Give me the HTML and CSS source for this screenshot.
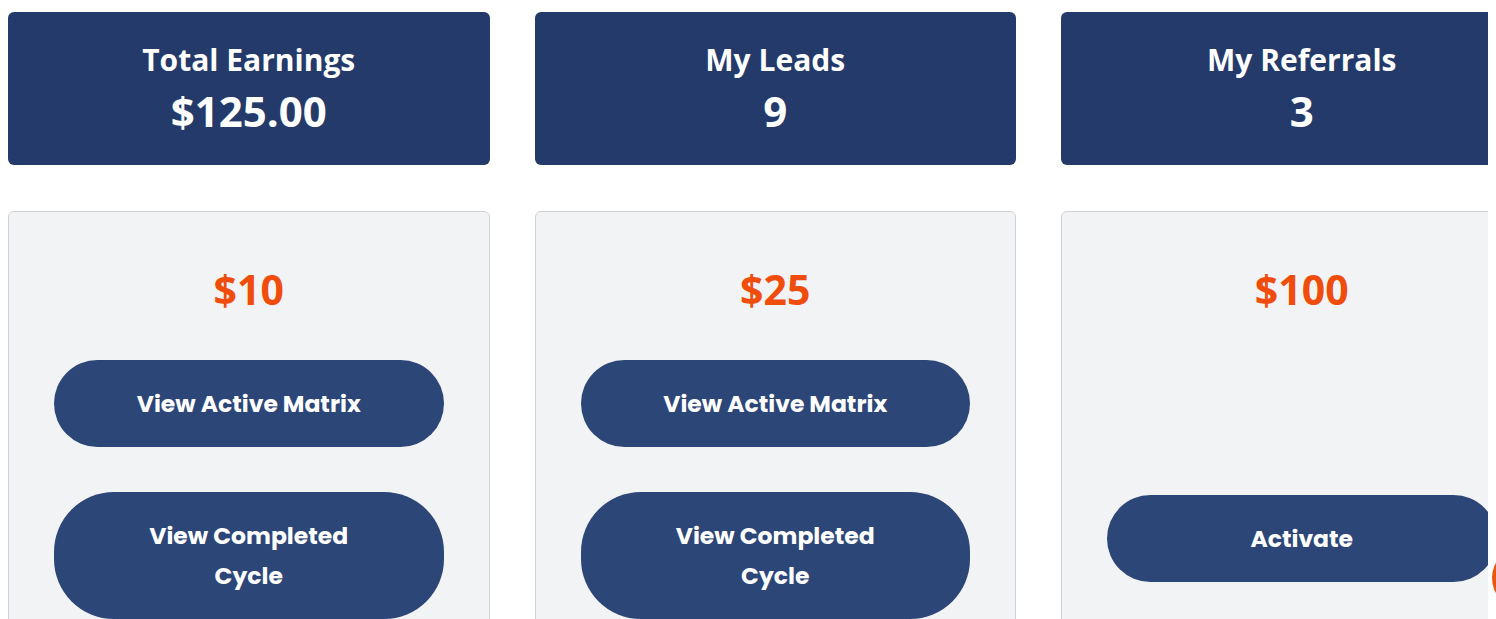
FILE: index.html
```html
<!DOCTYPE html>
<html lang="en">

<head>
  <meta charset="UTF-8">
  <meta name="viewport" content="width=device-width, initial-scale=1.0">
  <title>Dashboard</title>
  <link rel="stylesheet" href="styles.css">
</head>

<body>
  <div class="dashboard">
    <div class="stats">
      <div class="stat">
        <h2 class="stat-title">Total Earnings</h2>
        <p class="stat-value">$125.00</p>
      </div>
      <div class="stat">
        <h2 class="stat-title">My Leads</h2>
        <p class="stat-value">9</p>
      </div>
      <div class="stat">
        <h2 class="stat-title">My Referrals</h2>
        <p class="stat-value">3</p>
      </div>
    </div>

    <div class="plans">
      <div class="plan">
        <h3 class="plan-price">$10</h3>
        <button class="plan-btn">View Active Matrix</button>
        <button class="plan-btn">View Completed<br>Cycle</button>
      </div>
      <div class="plan">
        <h3 class="plan-price">$25</h3>
        <button class="plan-btn">View Active Matrix</button>
        <button class="plan-btn">View Completed<br>Cycle</button>
      </div>
      <div class="plan">
        <h3 class="plan-price">$100</h3>
        <button class="plan-btn plan-btn--activate">Activate</button>
      </div>
    </div>
  </div>
  <div class="chat-bubble"></div>
</body>

</html>
```

FILE: styles.css
```css
body {
  margin: 8px;
  background: #fff;
  font-family: "Open Sans", "Noto Sans", sans-serif;
}

.dashboard {
  padding-top: 4px;
  width: 1535px;
}

.stats,
.plans {
  display: grid;
  grid-template-columns: repeat(3, 481.5px);
  column-gap: 45px;
}

.stat {
  background: #243a6a;
  border-radius: 6px;
  color: #fff;
  text-align: center;
  padding: 30px 0 29px;
}

.stat-title {
  margin: 0;
  font-size: 30px;
  font-weight: 700;
  line-height: 36px;
}

.stat-value {
  margin: 8px 0 0;
  font-size: 42px;
  font-weight: 700;
  line-height: 50px;
}

.plans {
  margin-top: 46px;
}

.plan {
  background: #f2f3f5;
  border: 1px solid #d0d1d6;
  border-radius: 6px;
  padding: 53px 45px 40px;
  display: flex;
  flex-direction: column;
  align-items: stretch;
  height: 500px;
}

.plan-price {
  margin: 0;
  text-align: center;
  color: #f04c0c;
  font-size: 41px;
  font-weight: 700;
  line-height: 48px;
}

.plan-btn {
  margin-top: 47px;
  border: 0;
  border-radius: 60px;
  background: #2c4677;
  color: #fff;
  font-family: "Poppins", "Inter", sans-serif;
  font-size: 23.5px;
  font-weight: 700;
  line-height: 40px;
  padding: 24px 10px 23px;
  cursor: pointer;
}

.plan-btn + .plan-btn {
  margin-top: 45px;
}

.plan-btn--activate {
  margin-top: 182px;
}

.chat-bubble {
  position: fixed;
  top: 546px;
  right: -60px;
  width: 64px;
  height: 64px;
  border-radius: 50%;
  background: #e8560f;
}
```
